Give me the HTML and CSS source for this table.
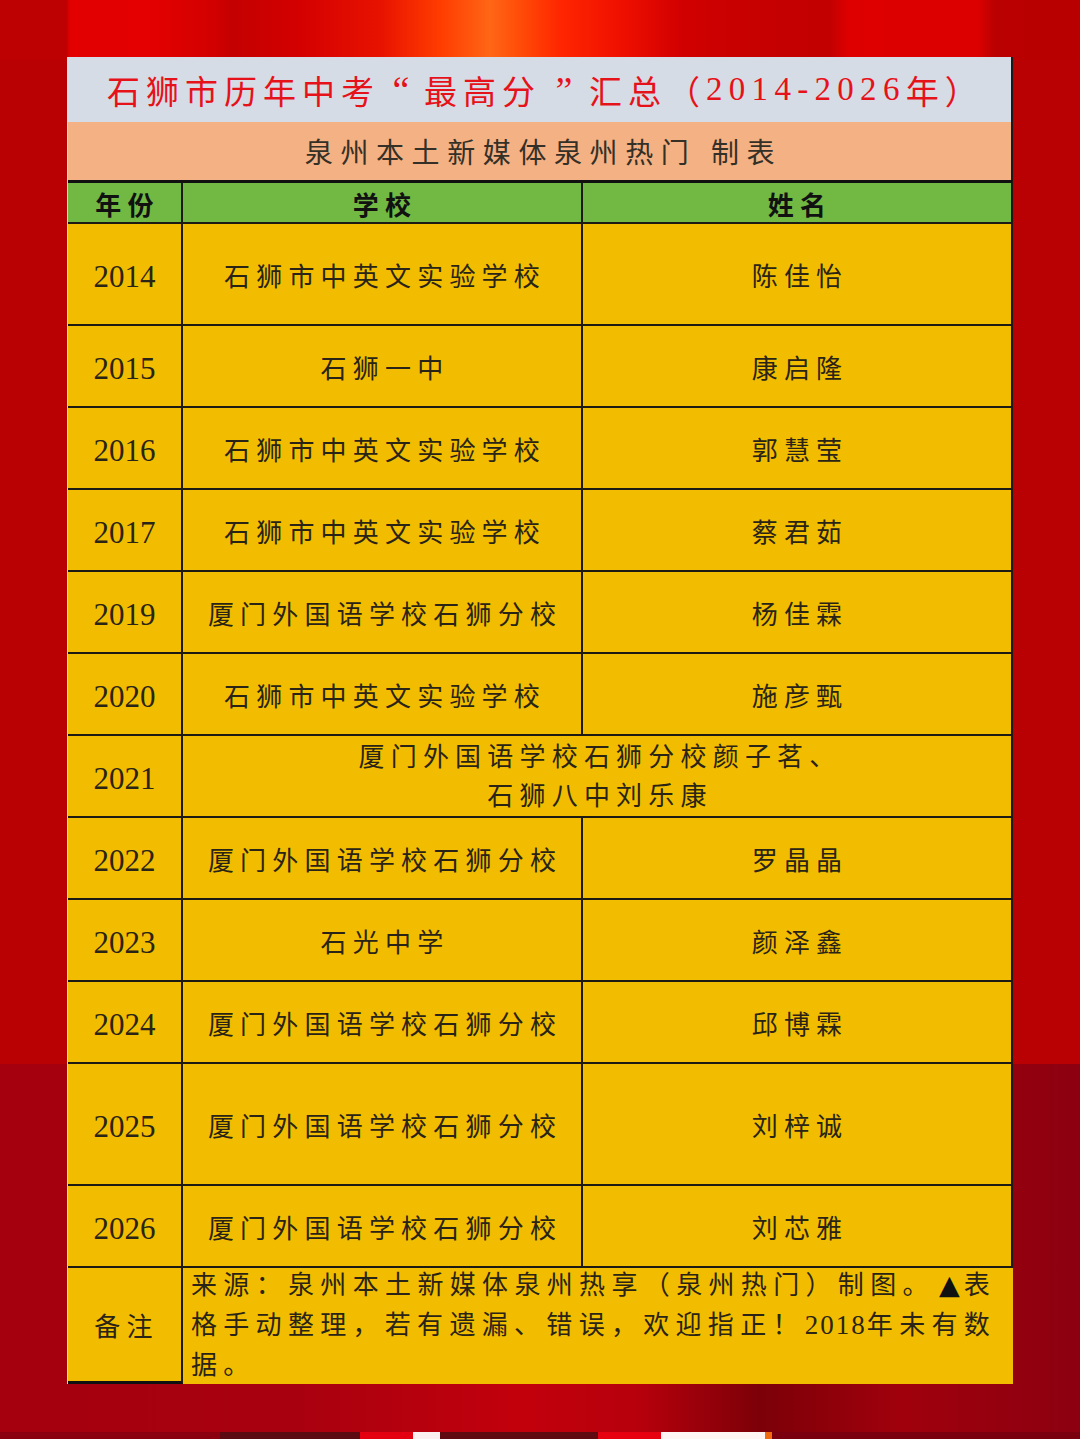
FILE: index.html
```html
<!DOCTYPE html>
<html lang="zh-CN">
<head>
<meta charset="utf-8">
<title>石狮市历年中考“最高分”汇总</title>
<link rel="stylesheet" href="styles.css">
</head>
<body>
<div class="page">
  <div class="sheet">
    <div class="title">石狮市历年中考<span class="q">“</span>最高分<span class="q q2">”</span>汇总（<span class="num">2014-2026</span>年）</div>
    <div class="subtitle">泉州本土新媒体泉州热门 制表</div>
    <div class="row head">
      <div class="cell c1">年份</div>
      <div class="cell c2">学校</div>
      <div class="cell c3">姓名</div>
    </div>
    <div class="row h102">
      <div class="cell c1 year">2014</div>
      <div class="cell c2">石狮市中英文实验学校</div>
      <div class="cell c3">陈佳怡</div>
    </div>
    <div class="row">
      <div class="cell c1 year">2015</div>
      <div class="cell c2">石狮一中</div>
      <div class="cell c3">康启隆</div>
    </div>
    <div class="row">
      <div class="cell c1 year">2016</div>
      <div class="cell c2">石狮市中英文实验学校</div>
      <div class="cell c3">郭慧莹</div>
    </div>
    <div class="row">
      <div class="cell c1 year">2017</div>
      <div class="cell c2">石狮市中英文实验学校</div>
      <div class="cell c3">蔡君茹</div>
    </div>
    <div class="row">
      <div class="cell c1 year">2019</div>
      <div class="cell c2">厦门外国语学校石狮分校</div>
      <div class="cell c3">杨佳霖</div>
    </div>
    <div class="row">
      <div class="cell c1 year">2020</div>
      <div class="cell c2">石狮市中英文实验学校</div>
      <div class="cell c3">施彦甄</div>
    </div>
    <div class="row">
      <div class="cell c1 year">2021</div>
      <div class="cell merged">厦门外国语学校石狮分校颜子茗、<br>石狮八中刘乐康</div>
    </div>
    <div class="row">
      <div class="cell c1 year">2022</div>
      <div class="cell c2">厦门外国语学校石狮分校</div>
      <div class="cell c3">罗晶晶</div>
    </div>
    <div class="row">
      <div class="cell c1 year">2023</div>
      <div class="cell c2">石光中学</div>
      <div class="cell c3">颜泽鑫</div>
    </div>
    <div class="row">
      <div class="cell c1 year">2024</div>
      <div class="cell c2">厦门外国语学校石狮分校</div>
      <div class="cell c3">邱博霖</div>
    </div>
    <div class="row h122">
      <div class="cell c1 year">2025</div>
      <div class="cell c2">厦门外国语学校石狮分校</div>
      <div class="cell c3">刘梓诚</div>
    </div>
    <div class="row">
      <div class="cell c1 year">2026</div>
      <div class="cell c2">厦门外国语学校石狮分校</div>
      <div class="cell c3">刘芯雅</div>
    </div>
    <div class="row note">
      <div class="cell c1 label">备注</div>
      <div class="cell notetext">
        <div class="just">来源：泉州本土新媒体泉州热享（泉州热门）制图。<span class="tri">▲</span>表<br>格手动整理，若有遗漏、错误，欢迎指正！<span class="n">2018</span>年未有数</div>
        <div class="last">据。</div>
      </div>
    </div>
  </div>
</div>
</body>
</html>
```

FILE: styles.css
```css
html, body {
  margin: 0;
  padding: 0;
}

body {
  width: 1080px;
  height: 1439px;
  overflow: hidden;
  font-family: "Liberation Serif", "Noto Sans CJK SC", serif;
  color: #2a2416;
  background-color: #b90003;
  background-image:
    linear-gradient(90deg, #8a0010 0 220px, #5a0a10 220px 360px, #e40010 360px 413px, #fbeff0 413px 440px, #5e0a10 440px 598px, #e60010 598px 661px, #fff6f4 661px 765px, #f06a10 765px 772px, #7a0010 772px),
    linear-gradient(90deg, #a4000e 0px, #a9000f 300px, #c2000c 520px, #b6000c 640px, #7c0008 760px, #a0000c 900px, #8c0010 1080px),
    linear-gradient(90deg, #bd0002 0px, #bd0002 66px, #e20000 70px, #e40000 150px, #d20000 215px, #c40000 232px, #d40000 300px, #e81200 380px, #ff3c00 440px, #ff6616 490px, #ff4c08 520px, #ff2600 560px, #f01000 620px, #d20000 680px, #c80000 740px, #c20000 830px, #de0000 848px, #dc0000 978px, #ba0000 995px, #b80000 1080px);
  background-repeat: no-repeat;
  background-size: 100% 7px, 100% 375px, 100% 60px;
  background-position: left bottom, left bottom, left top;
}

.page {
  padding: 57px 0 0 67px;
}

.sheet {
  width: 946px;
  box-sizing: border-box;
  border-left: 1px solid #e2dbd2;
}

.title {
  height: 65px;
  box-sizing: border-box;
  background: #d6dce5;
  border-right: 2px solid #1a1a1a;
  color: #e6121a;
  font-size: 33px;
  letter-spacing: 6px;
  display: flex;
  align-items: center;
  justify-content: flex-start;
  padding-left: 39px;
  white-space: nowrap;
}

.title .q {
  display: inline-block;
  width: 42px;
  text-align: center;
  letter-spacing: 0;
  font-size: 38px;
  margin-right: 2px;
}

.title .q2 {
  width: 46px;
}

.title .num {
  letter-spacing: 6.3px;
}

.subtitle {
  height: 58px;
  box-sizing: border-box;
  background: #f4b183;
  border-right: 2px solid #1a1a1a;
  color: #353027;
  font-size: 28px;
  letter-spacing: 7.6px;
  display: flex;
  align-items: center;
  justify-content: center;
  padding-left: 8px;
  white-space: pre;
}

.row {
  display: grid;
  grid-template-columns: 115px 400px 1fr;
  grid-template-rows: 100%;
  height: 82px;
  box-sizing: border-box;
  background: #f2bd00;
  border-bottom: 2px solid #1c1a12;
  border-right: 2px solid #1c1a12;
}

.row.head {
  height: 44px;
  background: #72b944;
  border-top: 3px solid #111;
}

.row.h102 { height: 102px; }
.row.h122 { height: 122px; }

.cell {
  display: flex;
  align-items: center;
  justify-content: center;
  font-size: 26px;
  letter-spacing: 6.2px;
  padding-left: 6px;
  white-space: nowrap;
}

.c1, .c2 {
  border-right: 2px solid #1c1a12;
}

.head .cell {
  font-weight: bold;
  color: #111;
  padding-top: 1px;
}

.year {
  font-size: 31px;
  letter-spacing: 0;
  padding-left: 0;
  padding-top: 6px;
}

.merged {
  grid-column: 2 / 4;
  text-align: center;
  line-height: 39px;
  padding-top: 2px;
}

.row.note {
  height: 116px;
  border-bottom: none;
  border-right: none;
}

.note .label {
  border-bottom: 3px solid #111;
  padding-left: 4px;
}

.notetext {
  grid-column: 2 / 4;
  display: block;
  padding: 0 17px 0 8px;
  line-height: 40px;
  margin-top: -2px;
  white-space: normal;
}

.notetext .just {
  text-align: justify;
  text-align-last: justify;
  white-space: nowrap;
}

.notetext .n {
  display: inline-block;
  letter-spacing: 2px;
  font-size: 27px;
  line-height: 20px;
}

.notetext .tri {
  display: inline-block;
  font-family: "DejaVu Sans", sans-serif;
  font-size: 27px;
  line-height: 20px;
  letter-spacing: 0;
  margin: 0 4px 0 4px;
  color: #111;
}

.notetext .last {
  text-align: left;
}
```
